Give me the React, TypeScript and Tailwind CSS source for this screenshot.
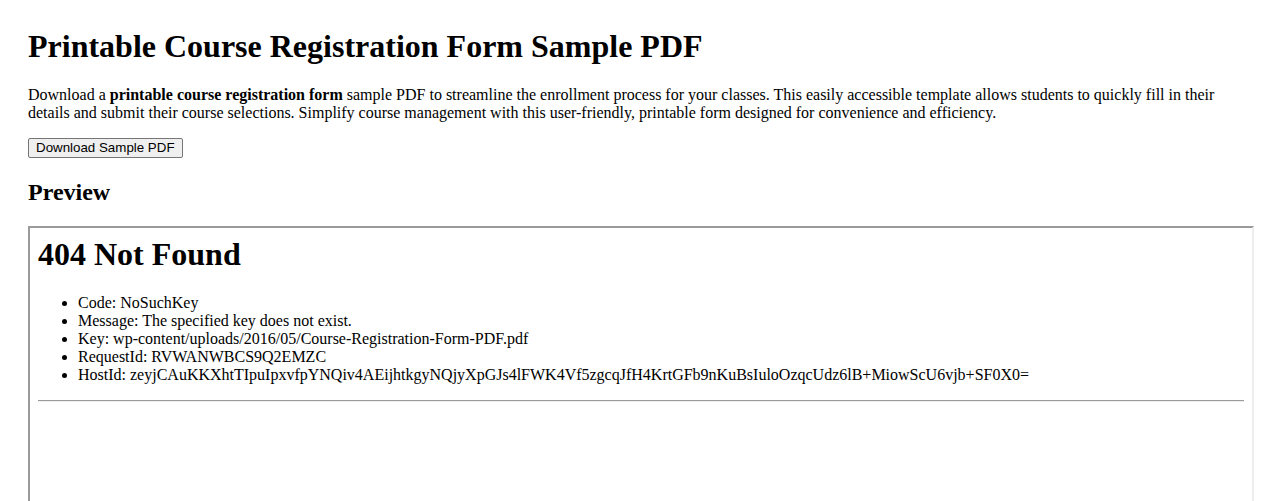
import React from "react";

export default function App() {
  return (
    <div className="h-[501px] overflow-hidden bg-white px-[28px] pt-[28px] font-['Liberation_Serif','Times_New_Roman',serif] text-black">
      <h1 className="m-0 text-[32px] font-bold leading-[37px]">
        Printable Course Registration Form Sample PDF
      </h1>
      <p className="mt-[21px] text-[16px] leading-[18px]">
        Download a <strong className="font-bold">printable course registration form</strong> sample PDF to
        streamline the enrollment process for your classes. This easily accessible template allows students to
        quickly fill in their details and submit their course selections. Simplify course management with this
        user-friendly, printable form designed for convenience and efficiency.
      </p>
      <div className="mt-[16px] flex">
        <button className="h-[20px] rounded-[2px] border border-[#767676] bg-[#efefef] px-[7px] py-0 font-['Liberation_Sans',Arial,sans-serif] text-[13.333px] leading-[16px] text-black">
          Download Sample PDF
        </button>
      </div>
      <h2 className="mt-[20px] text-[24px] font-bold leading-[28px]">Preview</h2>
      <div className="mt-[20px] h-[400px] w-[calc(100%+4px)] border-2 border-b-[#eeeeee] border-l-[#9a9a9a] border-r-[#eeeeee] border-t-[#9a9a9a] p-[8px]">
        <h1 className="text-[32px] font-bold leading-[37px]">404 Not Found</h1>
        <ul className="mt-[21px] list-disc pl-[40px] text-[16px] leading-[18px]">
          <li>Code: NoSuchKey</li>
          <li>Message: The specified key does not exist.</li>
          <li>Key: wp-content/uploads/2016/05/Course-Registration-Form-PDF.pdf</li>
          <li>RequestId: RVWANWBCS9Q2EMZC</li>
          <li>HostId: zeyjCAuKKXhtTIpuIpxvfpYNQiv4AEijhtkgyNQjyXpGJs4lFWK4Vf5zgcqJfH4KrtGFb9nKuBsIuloOzqcUdz6lB+MiowScU6vjb+SF0X0=</li>
        </ul>
        <hr className="mt-[16px] h-0 border-0 border-b border-t border-b-[#eeeeee] border-t-[#9a9a9a]" />
      </div>
    </div>
  );
}
